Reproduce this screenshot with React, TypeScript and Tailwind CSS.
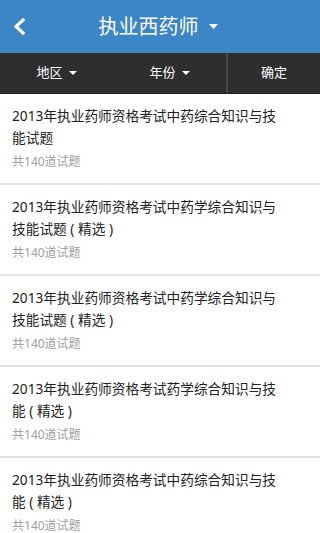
import React from "react";

const items = [
  { title: "2013年执业药师资格考试中药综合知识与技能试题", count: 140 },
  { title: "2013年执业药师资格考试中药学综合知识与技能试题 ( 精选 )", count: 140 },
  { title: "2013年执业药师资格考试中药学综合知识与技能试题 ( 精选 )", count: 140 },
  { title: "2013年执业药师资格考试药学综合知识与技能 ( 精选 )", count: 140 },
  { title: "2013年执业药师资格考试中药综合知识与技能 ( 精选 )", count: 140 },
];

const font = {
  fontFamily: '"Noto Sans", "Noto Sans CJK SC", sans-serif',
};

function Caret() {
  return (
    <svg width="8" height="4" viewBox="0 0 8 4" className="ml-[6px]">
      <path d="M0 0 L8 0 L4 4 Z" fill="#ffffff" />
    </svg>
  );
}

export default function App() {
  return (
    <div className="w-[320px] h-[533px] overflow-hidden bg-white" style={font}>
      <header className="h-[53px] bg-[#3d86c6] flex items-center relative">
        <button className="absolute left-[11px] top-[18px]">
          <svg width="16" height="17" viewBox="0 0 16 17">
            <path
              d="M12 2 L5 8.5 L12 15"
              stroke="#ffffff"
              strokeWidth="3.2"
              fill="none"
              strokeLinecap="square"
            />
          </svg>
        </button>
        <div className="flex-1 flex items-center justify-center pr-[4px]">
          <span className="text-white text-[20px] leading-none">执业西药师</span>
          <svg width="9" height="5" viewBox="0 0 9 5" className="ml-[10px]">
            <path d="M0 0 L9 0 L4.5 5 Z" fill="#ffffff" />
          </svg>
        </div>
      </header>

      <nav className="h-[41px] bg-[#2e2e2e] flex border-b border-[#1c1c1c]">
        <div className="w-[113px] flex items-center justify-center text-white text-[13px]">
          地区
          <Caret />
        </div>
        <div className="w-[113px] flex items-center justify-center text-white text-[13px]">
          年份
          <Caret />
        </div>
        <div className="w-[2px] bg-[#4a4a4a]" />
        <div className="flex-1 flex items-center justify-center text-white text-[13px]">
          确定
        </div>
      </nav>

      <ul>
        {items.map((item, index) => (
          <li
            key={index}
            className="h-[91px] border-b-2 border-[#e3e3e3] pl-[12px] pr-[44px] pt-[11px]"
          >
            <p className="text-[13.7px] leading-[22px] text-[#222222] whitespace-pre-wrap">
              {item.title}
            </p>
            <p className="text-[12px] leading-[20px] text-[#a0a0a0] mt-[3px]">
              共{item.count}道试题
            </p>
          </li>
        ))}
      </ul>
    </div>
  );
}
